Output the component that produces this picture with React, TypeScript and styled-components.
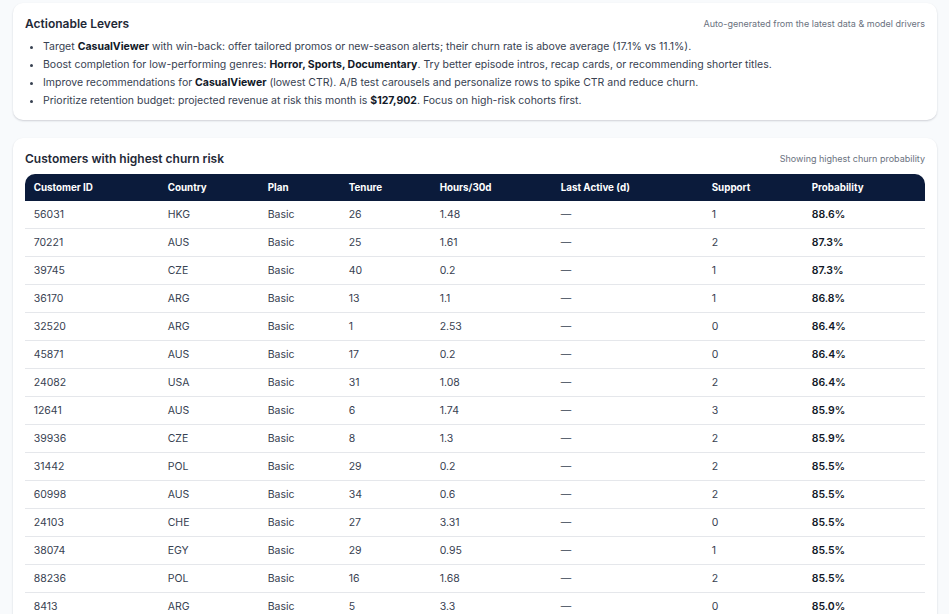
import React from 'react'
import styled, { createGlobalStyle } from 'styled-components'

const GlobalStyle = createGlobalStyle`
  html, body {
    margin: 0;
    padding: 0;
    height: 100%;
    overflow: hidden;
    background: #f8fafc;
    font-family: Inter, "Liberation Sans", sans-serif;
    color: #111827;
  }
`

const Page = styled.div`
  display: flex;
  flex-direction: column;
  gap: 18px;
  padding: 3px 12px 0 13px;
`

const Card = styled.section`
  background: #fff;
  border-radius: 10px;
  box-shadow: 0 1px 2px rgba(15, 23, 42, 0.18);
  padding: 12px 12px 10px;
`

const CardHeader = styled.header`
  display: flex;
  justify-content: space-between;
  align-items: center;
  height: 16px;
`

const Title = styled.h3`
  margin: 0;
  font-size: 12px;
  font-weight: 600;
  color: #1f2937;
`

const Note = styled.span`
  font-size: 9px;
  color: #6b7280;
`

const Levers = styled.ul`
  margin: 7px 0 0;
  padding: 0 0 0 18px;
  font-size: 10.5px;
  line-height: 18px;
  color: #374151;

  strong {
    font-weight: 700;
    color: #111827;
  }
`

const Table = styled.table`
  width: 900px;
  margin-top: 8px;
  border-collapse: separate;
  border-spacing: 0;
  table-layout: fixed;
  font-size: 10.5px;
`

const Th = styled.th<{ $w: number }>`
  width: ${p => p.$w}px;
  height: 27px;
  padding: 0 9px 0 8.7px;
  box-sizing: border-box;
  background: #0b1b3b;
  color: #fff;
  font-size: 9.8px;
  font-weight: 700;
  text-align: left;

  &:first-child { border-top-left-radius: 10px; }
  &:last-child { border-top-right-radius: 10px; }
`

const Td = styled.td<{ $strong?: boolean }>`
  height: 27px;
  padding: 0 9px 0 8.7px;
  border-bottom: 1px solid #e5e7eb;
  color: ${p => (p.$strong ? '#111827' : '#374151')};
  font-weight: ${p => (p.$strong ? 600 : 400)};
`

const columns: [string, number][] = [
  ['Customer ID', 134],
  ['Country', 100],
  ['Plan', 81],
  ['Tenure', 91],
  ['Hours/30d', 121],
  ['Last Active (d)', 151],
  ['Support', 100],
  ['Probability', 122],
]

const rows = [
  ['56031', 'HKG', '26', '1.48', '1', '88.6%'],
  ['70221', 'AUS', '25', '1.61', '2', '87.3%'],
  ['39745', 'CZE', '40', '0.2', '1', '87.3%'],
  ['36170', 'ARG', '13', '1.1', '1', '86.8%'],
  ['32520', 'ARG', '1', '2.53', '0', '86.4%'],
  ['45871', 'AUS', '17', '0.2', '0', '86.4%'],
  ['24082', 'USA', '31', '1.08', '2', '86.4%'],
  ['12641', 'AUS', '6', '1.74', '3', '85.9%'],
  ['39936', 'CZE', '8', '1.3', '2', '85.9%'],
  ['31442', 'POL', '29', '0.2', '2', '85.5%'],
  ['60998', 'AUS', '34', '0.6', '2', '85.5%'],
  ['24103', 'CHE', '27', '3.31', '0', '85.5%'],
  ['38074', 'EGY', '29', '0.95', '1', '85.5%'],
  ['88236', 'POL', '16', '1.68', '2', '85.5%'],
  ['8413', 'ARG', '5', '3.3', '0', '85.0%'],
]

export default function App() {
  return (
    <>
      <GlobalStyle />
      <Page>
        <Card>
          <CardHeader>
            <Title>Actionable Levers</Title>
            <Note>Auto-generated from the latest data &amp; model drivers</Note>
          </CardHeader>
          <Levers>
            <li>Target <strong>CasualViewer</strong> with win-back: offer tailored promos or new-season alerts; their churn rate is above average (17.1% vs 11.1%).</li>
            <li>Boost completion for low-performing genres: <strong>Horror, Sports, Documentary</strong>. Try better episode intros, recap cards, or recommending shorter titles.</li>
            <li>Improve recommendations for <strong>CasualViewer</strong> (lowest CTR). A/B test carousels and personalize rows to spike CTR and reduce churn.</li>
            <li>Prioritize retention budget: projected revenue at risk this month is <strong>$127,902</strong>. Focus on high-risk cohorts first.</li>
          </Levers>
        </Card>
        <Card>
          <CardHeader>
            <Title>Customers with highest churn risk</Title>
            <Note>Showing highest churn probability</Note>
          </CardHeader>
          <Table>
            <thead>
              <tr>
                {columns.map(([name, w]) => <Th key={name} $w={w}>{name}</Th>)}
              </tr>
            </thead>
            <tbody>
              {rows.map(r => (
                <tr key={r[0]}>
                  <Td>{r[0]}</Td>
                  <Td>{r[1]}</Td>
                  <Td>Basic</Td>
                  <Td>{r[2]}</Td>
                  <Td>{r[3]}</Td>
                  <Td>—</Td>
                  <Td>{r[4]}</Td>
                  <Td $strong>{r[5]}</Td>
                </tr>
              ))}
            </tbody>
          </Table>
        </Card>
      </Page>
    </>
  )
}
